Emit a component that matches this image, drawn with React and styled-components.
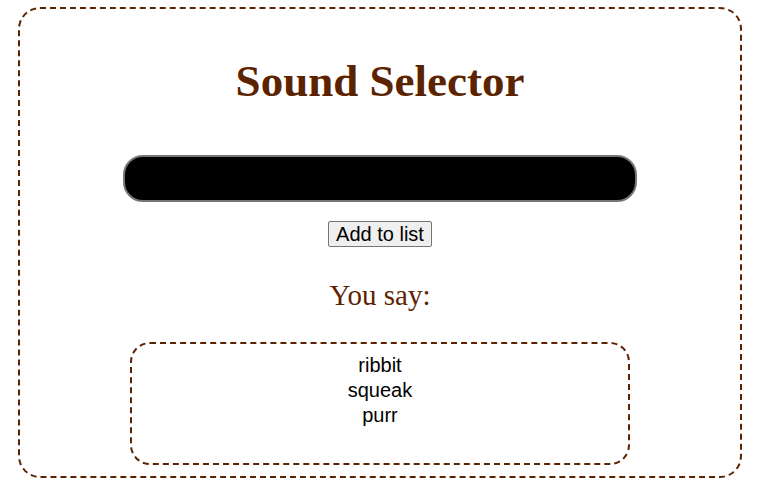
import React from "react";
import { styled, createGlobalStyle } from "styled-components";

const GlobalStyle = createGlobalStyle`
  body {
    margin: 0;
    background: #fff;
    font-family: "Liberation Sans", Arial, sans-serif;
  }
`;

const brown = "#5c2300";

const Panel = styled.div`
  box-sizing: border-box;
  margin: 7px 19px 0 18px;
  height: 471px;
  border: 2px dashed ${brown};
  border-radius: 22px;
  display: flex;
  flex-direction: column;
  align-items: center;
`;

const Title = styled.h1`
  margin: 46px 0 0;
  font-family: "Liberation Serif", "Times New Roman", serif;
  font-size: 45px;
  line-height: 52px;
  font-weight: bold;
  color: ${brown};
`;

const SoundInput = styled.input`
  box-sizing: border-box;
  margin-top: 48px;
  width: 514px;
  height: 47px;
  background: #000;
  color: #fff;
  border: 2px solid #767676;
  border-radius: 20px;
  padding: 0 16px;
  font-size: 20px;
  outline: none;
`;

const AddButton = styled.button`
  margin-top: 19px;
  height: 26px;
  padding: 0 7px;
  font-family: "Liberation Sans", Arial, sans-serif;
  font-size: 20px;
  line-height: 22px;
  color: #000;
  background: #efefef;
  border: 1px solid #767676;
  border-radius: 2px;
`;

const Subtitle = styled.h2`
  margin: 31px 0 0;
  font-family: "Liberation Serif", "Times New Roman", serif;
  font-size: 29px;
  line-height: 34px;
  font-weight: normal;
  color: ${brown};
`;

const SoundList = styled.ul`
  box-sizing: border-box;
  list-style: none;
  margin: 30px 0 0;
  width: 500px;
  height: 123px;
  padding: 9px 0 0;
  border: 2px dashed ${brown};
  border-radius: 20px;
  text-align: center;
`;

const SoundItem = styled.li`
  font-size: 20px;
  line-height: 25px;
  color: #000;
`;

export default function App() {
  const [value, setValue] = React.useState("");
  const [sounds, setSounds] = React.useState(["ribbit", "squeak", "purr"]);

  const addSound = () => {
    if (!value.trim()) return;
    setSounds([...sounds, value.trim()]);
    setValue("");
  };

  return (
    <>
      <GlobalStyle />
      <Panel>
        <Title>Sound Selector</Title>
        <SoundInput
          type="text"
          value={value}
          onChange={(e) => setValue(e.target.value)}
        />
        <AddButton onClick={addSound}>Add to list</AddButton>
        <Subtitle>You say:</Subtitle>
        <SoundList>
          {sounds.map((s, i) => (
            <SoundItem key={i}>{s}</SoundItem>
          ))}
        </SoundList>
      </Panel>
    </>
  );
}
